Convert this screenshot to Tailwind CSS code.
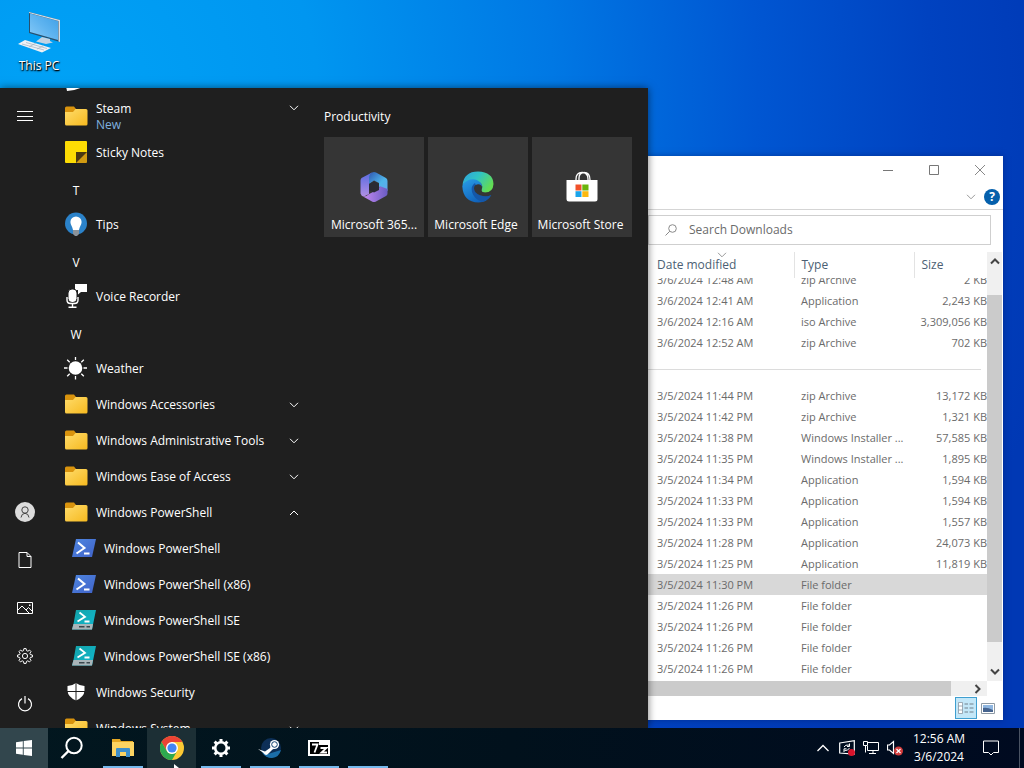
<!DOCTYPE html>
<html lang="en">
<head>
  <meta charset="UTF-8" />
  <meta name="viewport" content="width=device-width, initial-scale=1" />
  <title>Desktop</title>
  <script src="https://cdn.jsdelivr.net/npm/@tailwindcss/browser@4"></script>
</head>
<body class="h-screen flex flex-col overflow-hidden font-['Open_Sans',sans-serif] text-[12px] leading-4 bg-[radial-gradient(ellipse_100%_130%_at_6%_12%,#00a2f6_0%,#0096f0_25%,#0078e4_48%,#0056d2_68%,#0042c0_85%,#0038b4_100%)]">

  <!-- shared icons -->
  <svg class="absolute h-0 w-0">
    <defs>
      <linearGradient id="gFolder" x1="0" y1="0" x2="1" y2="1"><stop offset="0" stop-color="#ffdc6b" /><stop offset="1" stop-color="#f6b91f" /></linearGradient>
      <linearGradient id="gBlue" x1="0" y1="0" x2="1" y2="1"><stop offset="0" stop-color="#4f86e0" /><stop offset="1" stop-color="#3f62c8" /></linearGradient>
      <linearGradient id="gTeal" x1="0" y1="0" x2="1" y2="1"><stop offset="0" stop-color="#14a2a8" /><stop offset="1" stop-color="#10b8cf" /></linearGradient>
    </defs>
    <symbol id="folder" viewBox="0 0 24 20">
      <path d="M1 2Q1 .5 2.500 .5H10L12 3V8H1z" fill="#d9930d" />
      <path d="M1 6H9L11.500 3H22Q23.500 3 23.500 4.500V18Q23.500 19.500 22 19.500H2.500Q1 19.500 1 18z" fill="url(#gFolder)" />
    </symbol>
    <symbol id="down" viewBox="0 0 10 6"><path d="M1 .8L5 4.800 9 .8" fill="none" stroke="currentColor" /></symbol>
    <symbol id="up" viewBox="0 0 10 6"><path d="M1 5L5 1 9 5" fill="none" stroke="currentColor" /></symbol>
    <symbol id="ps" viewBox="0 0 24 20">
      <path d="M4 1H24L20 19H0z" fill="url(#gBlue)" />
      <path d="M6 4.500L12.500 10 4.500 15.500M12 15.500H17.500" fill="none" stroke="#fff" stroke-width="2" />
    </symbol>
    <symbol id="ise" viewBox="0 0 24 20">
      <path d="M4 0H24L20 19.500H0L1.500 14z" fill="url(#gTeal)" />
      <path d="M1.500 14H21L20 19.500H0z" fill="#a9b4b8" />
      <path d="M7 16.800H12.500M14.500 16.800H18" stroke="#3a474d" stroke-width="1.500" />
      <path d="M7.500 2.500L13 6.800 5.500 11.500M12.500 11.500H17.500" fill="none" stroke="#fff" stroke-width="1.800" />
    </symbol>
  </svg>

  <main class="relative flex-1 overflow-hidden">

    <!-- desktop shortcut -->
    <button class="absolute left-0 top-[8px] w-[78px] flex flex-col items-center text-white">
      <svg class="w-11 h-[46px]" viewBox="0 0 44 46">
        <defs>
          <linearGradient id="gScreen" x1="0" y1="1" x2="1" y2="0"><stop offset="0" stop-color="#8accf8" /><stop offset=".5" stop-color="#5fb4f0" /><stop offset="1" stop-color="#3d9fe6" /></linearGradient>
        </defs>
        <path d="M12 4L43 12V34L12 25z" fill="#27506f" />
        <path d="M13 5.500L41 13V32L13 24z" fill="url(#gScreen)" />
        <path d="M12 4L43 12V34L41.500 33.500V13L12 5z" fill="#d9dfe5" />
        <path d="M25 29L33 31V33L36 34.500 29 36 19 33.500z" fill="#c3d3e2" />
        <path d="M1 36L8 32 34 40 25 44.500z" fill="#eef1f5" />
        <path d="M5 36L27 42M9 34.500L30 40.500M12 39L19 35M20 41L27 37.500" stroke="#9fb0c0" stroke-width=".7" />
      </svg>
      <span class="mt-1 [text-shadow:0_1px_2px_#000,1px_1px_1px_#000]">This PC</span>
    </button>

    <!-- file explorer -->
    <section class="absolute left-[600px] right-[21px] top-[156px] bottom-[8px] flex flex-col bg-white pl-[48px] text-[#6b6b6b] shadow-[0_0_6px_#001b6680]">
      <header class="flex h-[28px] items-center justify-end">
        <button class="flex w-[46px] justify-center" aria-label="Minimize"><svg class="w-3 h-3" viewBox="0 0 12 12"><path d="M1 6.500H11" stroke="#777" /></svg></button>
        <button class="flex w-[46px] justify-center" aria-label="Maximize"><svg class="w-3 h-3" viewBox="0 0 12 12"><path d="M1.500 1.500H10.500V10.500H1.500z" fill="none" stroke="#777" /></svg></button>
        <button class="flex w-[46px] justify-center" aria-label="Close"><svg class="w-3 h-3" viewBox="0 0 12 12"><path d="M1 1L11 11M11 1L1 11" stroke="#888" /></svg></button>
      </header>
      <div class="flex h-[26px] items-center justify-end gap-2 border-b border-[#d5d5d5] pr-[3px]">
        <button class="text-[#999]" aria-label="Expand ribbon"><svg class="w-[10px] h-[6px]"><use href="#down" /></svg></button>
        <button class="w-4 h-4 rounded-full bg-[#0560ac] text-white font-bold text-[12px] leading-4" aria-label="Help">?</button>
      </div>
      <div class="mt-[5px] mr-3 flex h-[30px] items-center border border-[#cfcfcf] pl-4">
        <svg class="w-3 h-3" viewBox="0 0 12 12"><circle cx="7.500" cy="4.500" r="3.800" fill="none" stroke="#8a8a8a" /><path d="M4.800 7.200L.5 11.500" stroke="#8a8a8a" /></svg>
        <input type="text" aria-label="Search Downloads" placeholder="Search Downloads" class="ml-3 flex-1 outline-none placeholder:text-[#6b6b6b]" />
      </div>

      <div class="mt-[7px] flex min-h-0 flex-1">
        <div class="min-w-0 flex-1 overflow-hidden">
          <table class="w-full table-fixed whitespace-nowrap">
            <thead class="text-left text-[#4c5f74]">
              <tr class="h-[26px]">
                <th class="relative w-[146px] border-r border-[#e3e3e3] p-0 pl-[9px] font-normal">Date modified<svg class="absolute left-[69px] top-0 w-[10px] h-[6px] text-[#999]"><use href="#down" /></svg></th>
                <th class="w-[120px] border-r border-[#e3e3e3] p-0 pl-[7px] font-normal">Type</th>
                <th class="p-0 pl-[7px] font-normal">Size</th>
              </tr>
            </thead>
            <tbody class="text-[11px] leading-[21px] [&_td]:p-0 [&_td:first-child]:pl-[9px] [&_td:nth-child(2)]:pl-[7px] [&_td:nth-child(3)]:text-right">
              <!-- first row is scrolled half under the header -->
              <tr>
                <td><div class="flex h-3 items-end overflow-hidden">3/6/2024 12:48 AM</div></td>
                <td><div class="flex h-3 items-end overflow-hidden">zip Archive</div></td>
                <td><div class="flex h-3 items-end justify-end overflow-hidden">2 KB</div></td>
              </tr>
              <tr><td>3/6/2024 12:41 AM</td><td>Application</td><td>2,243 KB</td></tr>
              <tr><td>3/6/2024 12:16 AM</td><td>iso Archive</td><td>3,309,056 KB</td></tr>
              <tr><td>3/6/2024 12:52 AM</td><td>zip Archive</td><td>702 KB</td></tr>
              <tr class="h-8"><td colspan="3"><hr class="-ml-[9px] mr-[6px] border-[#dcdcdc]" /></td></tr>
              <tr><td>3/5/2024 11:44 PM</td><td>zip Archive</td><td>13,172 KB</td></tr>
              <tr><td>3/5/2024 11:42 PM</td><td>zip Archive</td><td>1,321 KB</td></tr>
              <tr><td>3/5/2024 11:38 PM</td><td>Windows Installer ...</td><td>57,585 KB</td></tr>
              <tr><td>3/5/2024 11:35 PM</td><td>Windows Installer ...</td><td>1,895 KB</td></tr>
              <tr><td>3/5/2024 11:34 PM</td><td>Application</td><td>1,594 KB</td></tr>
              <tr><td>3/5/2024 11:33 PM</td><td>Application</td><td>1,594 KB</td></tr>
              <tr><td>3/5/2024 11:33 PM</td><td>Application</td><td>1,557 KB</td></tr>
              <tr><td>3/5/2024 11:28 PM</td><td>Application</td><td>24,073 KB</td></tr>
              <tr><td>3/5/2024 11:25 PM</td><td>Application</td><td>11,819 KB</td></tr>
              <tr class="bg-[#d8d8d8]"><td>3/5/2024 11:30 PM</td><td>File folder</td><td></td></tr>
              <tr><td>3/5/2024 11:26 PM</td><td>File folder</td><td></td></tr>
              <tr><td>3/5/2024 11:26 PM</td><td>File folder</td><td></td></tr>
              <tr><td>3/5/2024 11:26 PM</td><td>File folder</td><td></td></tr>
              <tr><td>3/5/2024 11:26 PM</td><td>File folder</td><td></td></tr>
            </tbody>
          </table>
        </div>
        <!-- vertical scrollbar -->
        <div class="mr-px flex w-[15px] flex-col items-center bg-[#f0f0f0] text-[#444]">
          <button class="flex h-[43px] w-full justify-center pt-[6px]" aria-label="Scroll up"><svg class="w-[10px] h-[7px]" viewBox="0 0 10 7"><path d="M1 5.500L5 1.500 9 5.500" fill="none" stroke="currentColor" stroke-width="2" /></svg></button>
          <div class="w-full flex-1 bg-[#cbcbcb]"></div>
          <button class="flex h-[39px] w-full items-end justify-center pb-[6px]" aria-label="Scroll down"><svg class="w-[10px] h-[7px]" viewBox="0 0 10 7"><path d="M1 1.500L5 5.500 9 1.500" fill="none" stroke="currentColor" stroke-width="2" /></svg></button>
        </div>
      </div>

      <!-- horizontal scrollbar -->
      <div class="mr-4 flex h-[15px] bg-[#f0f0f0]">
        <div class="flex-1 bg-[#cbcbcb]"></div>
        <button class="flex w-9 items-center justify-end pr-[6px] text-[#444]" aria-label="Scroll right"><svg class="w-[7px] h-[10px]" viewBox="0 0 7 10"><path d="M1.500 1L5.500 5 1.500 9" fill="none" stroke="currentColor" stroke-width="2" /></svg></button>
      </div>
      <footer class="flex h-6 items-center justify-end gap-1 pr-2">
        <button class="flex h-[22px] w-[22px] items-center justify-center border border-[#3f9fd0] bg-[#c3e7f8]" aria-label="Details view">
          <svg class="w-4 h-3" viewBox="0 0 16 12"><path d="M.5 .5H4.500V11.500H.5zM.5 4H4.500M.5 8H4.500" fill="#fff" stroke="#8b98a3" stroke-width=".8" /><path d="M6.500 2H10M6.500 6H10M6.500 10H10M11.500 2H15.500M11.500 6H15.500M11.500 10H15.500" stroke="#71808c" /></svg>
        </button>
        <button class="flex w-[14px]" aria-label="Thumbnail view">
          <svg class="w-[14px] h-[11px]" viewBox="0 0 14 11"><path d="M.5 .5H13.500V10.500H.5z" fill="#fff" stroke="#8e9aa5" /><path d="M2 2H12V9H2z" fill="#8fb6e0" /><path d="M2 5Q6 4 12 7V9H2z" fill="#46648f" /></svg>
        </button>
      </footer>
    </section>

    <!-- start menu -->
    <section class="absolute left-0 top-[88px] bottom-0 flex w-[648px] bg-[#1f1f1f] text-white shadow-[0_0_8px_#0008]">
      <nav class="flex w-12 shrink-0 flex-col items-center pl-[2px] pt-[22px] pb-3">
        <button aria-label="Menu"><svg class="h-3 w-4" viewBox="0 0 16 12"><path d="M0 1.500H16M0 6.500H16M0 10.500H16" stroke="#fff" /></svg></button>
        <div class="mt-auto flex flex-col items-center gap-6">
          <button class="flex h-6 items-center" aria-label="Account"><svg class="h-5 w-5" viewBox="0 0 20 20"><circle cx="10" cy="10" r="10" fill="#dcdcdc" /><circle cx="10" cy="8" r="3.200" fill="none" stroke="#444" /><path d="M6 15.500Q6.500 11.500 10 11.300 13.500 11.500 14 15.500" fill="none" stroke="#444" /></svg></button>
          <button class="flex h-6 items-center" aria-label="Documents"><svg class="h-4 w-4" viewBox="0 0 16 16"><path d="M2 .5H10L14 4.500V15.500H2zM10 .5V4.500H14" fill="none" stroke="#fff" /></svg></button>
          <button class="flex h-6 items-center" aria-label="Pictures"><svg class="h-4 w-4" viewBox="0 0 16 16"><path d="M.5 2.500H15.500V13.500H.5z" fill="none" stroke="#fff" /><path d="M.5 10.500L5 6 12 13M9 10L11.500 7.500 15.500 11.500" fill="none" stroke="#fff" /><path d="M12 4.500H13.500V6H12z" fill="#fff" /></svg></button>
          <button class="flex h-6 items-center" aria-label="Settings"><svg class="h-4 w-4" viewBox="0 0 16 16"><path d="M6.900 .6H9.100L9.500 2.600 10.900 3.200 12.600 2.100 14 3.600 12.900 5.300 13.400 6.600 15.400 7V9L13.400 9.400 12.900 10.700 14 12.400 12.500 13.900 10.800 12.800 9.500 13.400 9.100 15.400H6.900L6.500 13.400 5.200 12.800 3.500 13.900 2 12.400 3.100 10.700 2.600 9.400 .6 9V7L2.600 6.600 3.100 5.300 2 3.600 3.500 2.100 5.200 3.200 6.500 2.600z" fill="none" stroke="#fff" /><circle cx="8" cy="8" r="2.600" fill="none" stroke="#fff" /></svg></button>
          <button class="flex h-6 items-center" aria-label="Power"><svg class="h-4 w-4" viewBox="0 0 16 16"><path d="M5 2.600A6.500 6.500 0 1 0 11 2.600M8 0V7.500" fill="none" stroke="#fff" stroke-width="1.200" /></svg></button>
        </div>
      </nav>

      <div class="w-[260px] shrink-0 overflow-hidden">
        <ul class="-mt-[25px] pl-4 pr-[9px] [&>li]:flex [&>li]:h-9 [&>li]:items-center [&>li>svg:first-child]:mb-[2px]">
          <li><svg class="h-6 w-6" viewBox="0 0 24 24"><path d="M2 18H20Q14 22 3 23z" fill="#fff" /></svg></li>
          <li><svg class="mr-2 h-5 w-6"><use href="#folder" /></svg><span>Steam<br /><span class="text-[#7fb0df]">New</span></span><svg class="mb-[18px] ml-auto h-[6px] w-[10px]"><use href="#down" /></svg></li>
          <li>
            <svg class="mr-2 h-6 w-6" viewBox="0 0 24 24"><path d="M1 2Q1 1 2 1H22Q23 1 23 2V12L12 23H2Q1 23 1 22z" fill="#fddc04" /><path d="M12 12H23V22Q23 23 22 23H12z" fill="#d19a12" /><path d="M12 12H23L12 23z" fill="#4a3812" /></svg>Sticky Notes
          </li>
          <li class="pt-1"><span class="w-6 text-center">T</span></li>
          <li>
            <svg class="mr-2 h-6 w-6" viewBox="0 0 24 24"><circle cx="12" cy="11.500" r="11" fill="#2b82c9" /><path d="M12 4.500A5.600 5.600 0 0 1 17.600 10C17.600 13 15.500 14.500 15 18H9C8.500 14.500 6.400 13 6.400 10A5.600 5.600 0 0 1 12 4.500z" fill="#fff" /><path d="M9 18H15V22L13 24H11L9 22z" fill="#8b9299" /></svg>Tips
          </li>
          <li class="pt-1"><span class="w-6 text-center">V</span></li>
          <li>
            <svg class="mr-2 h-6 w-6" viewBox="0 0 24 24"><path d="M11 0H23V8H17L14 10.500V6H11z" fill="#fff" /><rect x="4" y="5" width="9" height="13.500" rx="4" fill="#fff" stroke="#1f1f1f" /><path d="M3 13V16Q3 19.500 6.500 19.500H10.500Q14 19.500 14 16V13M8.500 19.500V23M4.500 23.200H12.500" fill="none" stroke="#fff" stroke-width="1.400" /></svg>Voice Recorder
          </li>
          <li class="pt-1"><span class="w-6 text-center">W</span></li>
          <li>
            <svg class="mr-2 h-6 w-6" viewBox="0 0 24 24"><circle cx="11.500" cy="12" r="6.800" fill="#fff" /><path d="M11.500 1V4M11.500 20V23.500M0 12H3.500M19.500 12H23M3.200 3.700L5.700 6.200M17.300 17.800L19.800 20.300M19.800 3.700L17.300 6.200M5.700 17.800L3.200 20.300" stroke="#fff" stroke-width="1.300" /></svg>Weather
          </li>
          <li><svg class="mr-2 h-5 w-6"><use href="#folder" /></svg>Windows Accessories<svg class="ml-auto h-[6px] w-[10px]"><use href="#down" /></svg></li>
          <li><svg class="mr-2 h-5 w-6"><use href="#folder" /></svg>Windows Administrative Tools<svg class="ml-auto h-[6px] w-[10px]"><use href="#down" /></svg></li>
          <li><svg class="mr-2 h-5 w-6"><use href="#folder" /></svg>Windows Ease of Access<svg class="ml-auto h-[6px] w-[10px]"><use href="#down" /></svg></li>
          <li><svg class="mr-2 h-5 w-6"><use href="#folder" /></svg>Windows PowerShell<svg class="ml-auto h-[6px] w-[10px]"><use href="#up" /></svg></li>
          <li class="pl-2"><svg class="mr-2 h-5 w-6"><use href="#ps" /></svg>Windows PowerShell</li>
          <li class="pl-2"><svg class="mr-2 h-5 w-6"><use href="#ps" /></svg>Windows PowerShell (x86)</li>
          <li class="pl-2"><svg class="mr-2 h-5 w-6"><use href="#ise" /></svg>Windows PowerShell ISE</li>
          <li class="pl-2"><svg class="mr-2 h-5 w-6"><use href="#ise" /></svg>Windows PowerShell ISE (x86)</li>
          <li>
            <svg class="mr-2 h-5 w-6" viewBox="0 0 24 20"><path d="M12 1Q8 4 3.500 4V9Q4 15 12 18.500 20 15 20.500 9V4Q16 4 12 1z" fill="#fff" /><path d="M12 1V19M3 9.500H21" stroke="#1f1f1f" /></svg>Windows Security
          </li>
          <li><svg class="mr-2 h-5 w-6"><use href="#folder" /></svg>Windows System<svg class="ml-auto h-[6px] w-[10px]"><use href="#down" /></svg></li>
        </ul>
      </div>

      <div class="flex-1 px-4 pt-[21px]">
        <h2>Productivity</h2>
        <div class="mt-3 flex gap-1 whitespace-nowrap">
          <a href="#" class="flex h-[100px] w-[100px] flex-col items-center justify-end bg-[#353535] pb-1">
            <svg class="mb-[14px] h-8 w-8" viewBox="0 0 32 32">
              <defs>
                <linearGradient id="m1" x1="0" y1="0" x2="0" y2="1"><stop offset="0" stop-color="#5a6be0" /><stop offset="1" stop-color="#b08fe4" /></linearGradient>
                <linearGradient id="m2" x1="0" y1="0" x2="1" y2="1"><stop offset="0" stop-color="#2f58b0" /><stop offset=".6" stop-color="#4fb4ea" /><stop offset="1" stop-color="#62a8ee" /></linearGradient>
                <linearGradient id="m3" x1="0" y1="0" x2="1" y2="0"><stop offset="0" stop-color="#c58af0" /><stop offset="1" stop-color="#6a5cc4" /></linearGradient>
              </defs>
              <path d="M14 1.500L3.500 7Q2.500 8 2.500 9.500V22.500Q3 25 6 25.500L11 23V11Z" fill="url(#m1)" />
              <path d="M14 1.500Q16 .5 18 1.500L28 7Q29.500 8 29.500 10V20L21 16V12L16 9.500 11 13V7Q11 3 14 1.500z" fill="url(#m2)" />
              <path d="M29.500 18V22.500Q29.500 24 28 25L18 30.500Q16 31.500 14 30.500L5 25.500Q8 26 11 23L20 18.500Q21.500 17.500 21.500 15z" fill="url(#m3)" />
              <path d="M16 10.500L21 13V19L16 21.500 11 19V13z" fill="#2a2b33" />
            </svg>
            Microsoft 365...
          </a>
          <a href="#" class="flex h-[100px] w-[100px] flex-col items-center justify-end bg-[#353535] pb-1 pr-1">
            <svg class="mb-[14px] ml-1 h-8 w-8" viewBox="0 0 32 32">
              <defs>
                <linearGradient id="e1" x1="0" y1="0" x2="1" y2=".5"><stop offset="0" stop-color="#2f9fe0" /><stop offset=".5" stop-color="#30c4c4" /><stop offset="1" stop-color="#62dc55" /></linearGradient>
                <linearGradient id="e2" x1="0" y1="0" x2=".6" y2="1"><stop offset="0" stop-color="#2aa0ea" /><stop offset="1" stop-color="#0f5fb8" /></linearGradient>
              </defs>
              <path d="M.3 15Q3 7 11 7 18 7 20 14L18 24 29.300 24Q25 31.500 16.500 31.500 1 31 .3 15z" fill="url(#e2)" />
              <path d="M13 12Q8.500 15 10 21 12 28 20 31 26 29.500 29.300 24 23 26.500 18 24z" fill="#1557a8" />
              <path d="M.5 14Q2 .5 16 .5 31 1 31.500 13 31 21.500 23 21.500 19 21.500 19.500 19 21.500 15 18.500 11.500 14 7 8 8.500 3 10 .5 14z" fill="url(#e1)" />
              <path d="M12 17.500Q12 13.500 16 13.200 20 13.500 20 16.500 19 18.500 19.500 20 20.500 22 24 22 27.500 22 30.500 19.500 30.500 22 29.300 24 24 26.500 18 24.200 12.500 22 12 17.500z" fill="#353535" />
            </svg>
            Microsoft Edge
          </a>
          <a href="#" class="flex h-[100px] w-[100px] flex-col items-center justify-end bg-[#353535] pb-1 pr-[3px]">
            <svg class="mb-[14px] ml-[3px] h-8 w-8" viewBox="0 0 32 32">
              <path d="M10 9V8Q10 1.500 16 1.500 22 1.500 22 8V9M13 9V7Q13 2 17.500 1.500M24 9Q24 1.500 18 1.500" fill="none" stroke="#fff" stroke-width="1.300" />
              <path d="M.5 9H31.500V28Q31.500 30.500 29 30.500H3Q.5 30.500 .5 28z" fill="#fff" />
              <path d="M9.500 13.500H15.500V19.500H9.500z" fill="#f1512a" /><path d="M16.300 13.500H22.500V19.500H16.300z" fill="#6ab40c" /><path d="M9.500 20.200H15.500V26H9.500z" fill="#1ba4ea" /><path d="M16.300 20.200H22.500V26H16.300z" fill="#fbb811" />
            </svg>
            Microsoft Store
          </a>
        </div>
      </div>
    </section>
  </main>

  <!-- taskbar -->
  <footer class="relative flex h-10 shrink-0 bg-linear-to-r from-[#02171f] via-[#01111c] to-[#000a20] text-white">
    <button class="flex w-12 items-center justify-center bg-[#32464d]" aria-label="Start"><svg class="h-4 w-4" viewBox="0 0 16 16"><path d="M0 2.200L6.800 1.200V7.500H0zM7.700 1.100L16 0V7.500H7.700zM0 8.400H6.800V14.800L0 13.800zM7.700 8.400H16V16L7.700 14.900z" fill="#fff" /></svg></button>
    <button class="mr-[2px] flex w-12 items-center justify-center" aria-label="Search"><svg class="h-6 w-6" viewBox="0 0 24 24"><circle cx="14" cy="9.500" r="7.700" fill="none" stroke="#fff" stroke-width="2" /><path d="M8.500 15L1.500 22" stroke="#fff" stroke-width="2.400" /></svg></button>
    <button class="relative flex w-[49px] items-center justify-center" aria-label="File Explorer">
      <svg class="h-[18px] w-[22px]" viewBox="0 0 22 18"><path d="M0 0H8L9 2H21V6H0z" fill="#e5a823" /><path d="M0 3H22V17H0z" fill="#fcd462" /><path d="M4 18V10Q4 9 5 9H17Q18 9 18 10V18H14V13H8V18z" fill="#3d8fcb" /></svg>
      <span class="absolute bottom-0 h-[2px] w-10 bg-[#76b9ed]"></span>
    </button>
    <button class="flex w-[49px] items-center justify-center bg-[#1c2f35]" aria-label="Chrome">
      <svg class="h-6 w-6" viewBox="0 0 24 24"><circle cx="12" cy="12" r="12" fill="#fcc934" /><path d="M1.600 6A12 12 0 0 1 22.400 6H12L6.800 15z" fill="#ea4335" /><path d="M1.600 6A12 12 0 0 0 12 24L17.200 15A6 6 0 0 1 6.800 15z" fill="#2da94f" /><circle cx="12" cy="12" r="6" fill="#fff" /><circle cx="12" cy="12" r="4.600" fill="#4285f4" /></svg>
    </button>
    <button class="relative flex w-[49px] items-center justify-center" aria-label="Settings">
      <svg class="h-5 w-5" viewBox="0 0 20 20"><circle cx="10" cy="10" r="5.800" fill="none" stroke="#fff" stroke-width="2.600" /><path d="M10 1V4M10 16V19M1 10H4M16 10H19M3.600 3.600L5.800 5.800M14.200 14.200L16.400 16.400M16.400 3.600L14.200 5.800M5.800 14.200L3.600 16.400" stroke="#fff" stroke-width="3" /></svg>
      <span class="absolute bottom-0 h-[2px] w-10 bg-[#76b9ed]"></span>
    </button>
    <button class="relative flex w-[49px] items-center justify-center" aria-label="Steam">
      <svg class="h-6 w-6" viewBox="0 0 24 24"><circle cx="13" cy="12" r="10" fill="#0d2f57" /><path d="M4 16.500Q8 22 14 22 21 21.500 23 14L10 18z" fill="#1b6ea8" /><path d="M0 13L7 15.500 12 12 14 6.500 20 11 14.500 13.500 10.500 17.500Q8 20.500 5.500 17z" fill="#fff" /><circle cx="16.500" cy="8.500" r="4.600" fill="#fff" /><circle cx="16.500" cy="8.500" r="2.800" fill="none" stroke="#10406f" /></svg>
      <span class="absolute bottom-0 h-[2px] w-10 bg-[#76b9ed]"></span>
    </button>
    <button class="relative flex w-[49px] items-center justify-center" aria-label="7-Zip">
      <svg class="h-4 w-[22px]" viewBox="0 0 22 16"><path d="M0 0H22V16H0z" fill="#fff" /><path d="M2 2H11V14H2zM11 5H20V14H11z" fill="#000" /><path d="M4 4.500H9.500L6.500 12.500M12.500 8H18.500L13.500 12.500H19" fill="none" stroke="#fff" stroke-width="1.800" /></svg>
      <span class="absolute bottom-0 h-[2px] w-10 bg-[#76b9ed]"></span>
    </button>
    <button class="relative flex w-[49px] justify-center" aria-label="App"><span class="absolute bottom-0 h-[2px] w-10 bg-[#76b9ed]"></span></button>

    <div class="ml-auto flex pr-1">
      <button class="flex w-6 items-center justify-center" aria-label="Show hidden icons"><svg class="h-2 w-3" viewBox="0 0 12 8"><path d="M.5 7L6 1.500 11.500 7" fill="none" stroke="#fff" stroke-width="1.300" /></svg></button>
      <button class="flex w-6 items-center justify-center" aria-label="Update status"><svg class="h-4 w-4" viewBox="0 0 16 16"><path d="M.7 3L15.300 .7V14L.7 13z" fill="none" stroke="#fff" stroke-width="1.200" /><path d="M5 7Q6 4.500 10.500 5M10.500 3.500V6.500H8M10.500 8Q9 11 5.500 10.500M5 12V8.800H7.500" fill="none" stroke="#fff" /><circle cx="12.500" cy="12.500" r="3.500" fill="#d8142c" /></svg></button>
      <button class="flex w-6 items-center justify-center" aria-label="Network"><svg class="h-4 w-4" viewBox="0 0 16 16"><path d="M4.500 2.500H15.500V10.500H4.500V6M10 10.500V13.500M6 13.500H13M.5 1.500H4.500V5.500H.5zM2.500 5.500V12.500" fill="none" stroke="#fff" /></svg></button>
      <button class="flex w-6 items-center justify-center" aria-label="Volume"><svg class="h-4 w-4" viewBox="0 0 16 16"><path d="M.5 5H2.500L6.500 1.500V13.500L2.500 10H.5z" fill="none" stroke="#fff" stroke-width="1.200" /><circle cx="11.500" cy="11" r="4.500" fill="#d33c3c" /><path d="M9.500 9L13.500 13M13.500 9L9.500 13" stroke="#fff" stroke-width="1.200" /></svg></button>
      <div class="flex w-16 flex-col items-center pt-[2px] leading-[18px]"><span>12:56 AM</span><span>3/6/2024</span></div>
      <button class="mr-2 flex w-10 items-center justify-center" aria-label="Notifications"><svg class="h-4 w-4" viewBox="0 0 16 16"><path d="M.5 1H15.500V12.500H10.500L8 15 5.500 12.500H.5z" fill="none" stroke="#fff" /></svg></button>
      <span class="w-px bg-[#4a5363]"></span>
    </div>

    <!-- mouse pointer -->
    <svg class="absolute bottom-0 left-[174px] h-[4px] w-[5px]" viewBox="0 0 5 4"><path d="M0 0L5 4H0z" fill="#fff" /></svg>
  </footer>
</body>
</html>
